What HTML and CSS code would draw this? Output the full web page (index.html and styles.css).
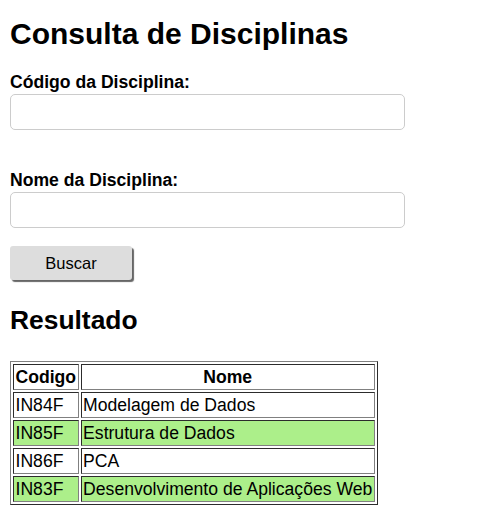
FILE: index.html
```html
<!DOCTYPE html>
<html lang="pt-BR">
<head>
    <meta charset="UTF-8">
    <meta name="viewport" content="width=device-width, initial-scale=1.0">
    <title>Consulta de Disciplinas</title>
    <link rel="stylesheet" href="styles.css">
</head>
<body>
    <h1>Consulta de Disciplinas</h1>

    <form class="busca" onsubmit="return false">
        <label for="codigo">Código da Disciplina:</label>
        <input type="text" id="codigo">

        <label for="nome">Nome da Disciplina:</label>
        <input type="text" id="nome">

        <button type="submit">Buscar</button>
    </form>

    <h2>Resultado</h2>

    <table class="resultado">
        <thead>
            <tr>
                <th>Codigo</th>
                <th>Nome</th>
            </tr>
        </thead>
        <tbody>
            <tr>
                <td>IN84F</td>
                <td>Modelagem de Dados</td>
            </tr>
            <tr class="par">
                <td>IN85F</td>
                <td>Estrutura de Dados</td>
            </tr>
            <tr>
                <td>IN86F</td>
                <td>PCA</td>
            </tr>
            <tr class="par">
                <td>IN83F</td>
                <td>Desenvolvimento de Aplicações Web</td>
            </tr>
        </tbody>
    </table>
</body>
</html>
```

FILE: styles.css
```css
* {
    box-sizing: border-box;
    font-family: "Liberation Sans", Arial, sans-serif;
}

body {
    margin: 0;
    padding: 10px;
    color: #000;
    background: #fff;
}

h1 {
    font-size: 30px;
    margin: 7px 0 21px;
}

h2 {
    font-size: 26.4px;
    margin: 25px 0 25px;
}

.busca label {
    display: block;
    font-weight: bold;
    font-size: 17.6px;
    margin-bottom: 1px;
}

.busca input {
    display: block;
    width: 395px;
    height: 36px;
    padding: 8px;
    border: 1px solid #ccc;
    border-radius: 5px;
    font-size: 16px;
    margin-bottom: 40px;
}

.busca input:last-of-type {
    margin-bottom: 18px;
}

.busca button {
    width: 122px;
    height: 34px;
    background: #ddd;
    border: none;
    border-radius: 3px;
    box-shadow: 2px 2px 1px #666;
    font-size: 16.5px;
    cursor: pointer;
}

.resultado {
    border: 1px outset #808080;
    border-spacing: 2px;
    font-size: 17.6px;
    line-height: 22px;
}

.resultado th,
.resultado td {
    border: 1px inset #808080;
    padding: 1px 1.5px;
    text-align: left;
}

.resultado th {
    text-align: center;
}

.resultado .par td {
    background: #acef8a;
}
```
